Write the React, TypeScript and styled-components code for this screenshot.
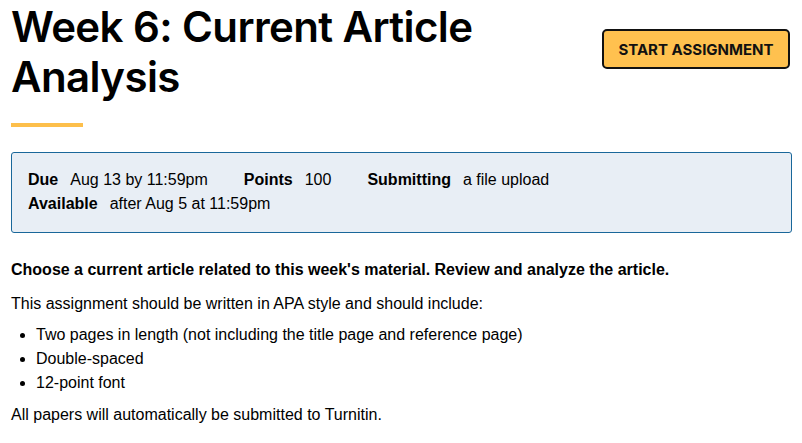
import React from "react";
import styled, { createGlobalStyle } from "styled-components";

const Global = createGlobalStyle`
  html, body { margin: 0; padding: 0; background: #ffffff; }
  body { font-family: "Liberation Sans", Arial, sans-serif; color: #000; }
`;

const Page = styled.div`
  padding: 0 10px 0 11px;
`;

const Header = styled.header`
  display: flex;
  justify-content: space-between;
  align-items: flex-start;
`;

const TitleBlock = styled.div`
  display: flex;
  flex-direction: column;
`;

const Title = styled.h1`
  margin: 0;
  padding-top: 2px;
  font-family: "Inter", "Noto Sans", sans-serif;
  font-weight: 600;
  font-size: 42px;
  line-height: 50px;
  letter-spacing: -0.6px;
  color: #000;
  max-width: 520px;
`;

const Accent = styled.div`
  width: 72px;
  height: 4px;
  background: #fdbf4b;
  margin-top: 21px;
`;

const StartButton = styled.button`
  margin-top: 29px;
  margin-right: 2px;
  width: 188px;
  height: 40px;
  box-sizing: border-box;
  background: #ffc14f;
  border: 2px solid #111;
  border-radius: 5px;
  font-family: "Inter", "Noto Sans", sans-serif;
  font-weight: 700;
  font-size: 15px;
  color: #111;
  text-transform: uppercase;
  cursor: pointer;
`;

const Details = styled.div`
  margin-top: 25px;
  box-sizing: border-box;
  height: 81px;
  background: #e8eef5;
  border: 1px solid #19679a;
  border-radius: 3px;
  padding: 15px 16px 13px;
  font-size: 16px;
  line-height: 24px;
`;

const DetailRow = styled.div`
  display: flex;
  gap: 36px;
`;

const Item = styled.span`
  white-space: nowrap;
`;

const Label = styled.b`
  font-weight: 700;
  margin-right: 12px;
`;

const Body = styled.div`
  margin-top: 25px;
  font-size: 16px;
  line-height: 24px;
`;

const Para = styled.p<{ $bold?: boolean }>`
  margin: 0;
  font-weight: ${(p) => (p.$bold ? 700 : 400)};
  & + & { margin-top: 10px; }
`;

const List = styled.ul`
  margin: 7px 0 8px 0;
  padding-left: 25px;
`;

const ListItem = styled.li``;

export default function App() {
  return (
    <>
      <Global />
      <Page>
        <Header>
          <TitleBlock>
            <Title>Week 6: Current Article Analysis</Title>
            <Accent />
          </TitleBlock>
          <StartButton>Start Assignment</StartButton>
        </Header>
        <Details>
          <DetailRow>
            <Item><Label>Due</Label>Aug 13 by 11:59pm</Item>
            <Item><Label>Points</Label>100</Item>
            <Item><Label>Submitting</Label>a file upload</Item>
          </DetailRow>
          <DetailRow>
            <Item><Label>Available</Label>after Aug 5 at 11:59pm</Item>
          </DetailRow>
        </Details>
        <Body>
          <Para $bold>Choose a current article related to this week's material. Review and analyze the article.</Para>
          <Para>This assignment should be written in APA style and should include:</Para>
          <List>
            <ListItem>Two pages in length (not including the title page and reference page)</ListItem>
            <ListItem>Double-spaced</ListItem>
            <ListItem>12-point font</ListItem>
          </List>
          <Para>All papers will automatically be submitted to Turnitin.</Para>
        </Body>
      </Page>
    </>
  );
}
